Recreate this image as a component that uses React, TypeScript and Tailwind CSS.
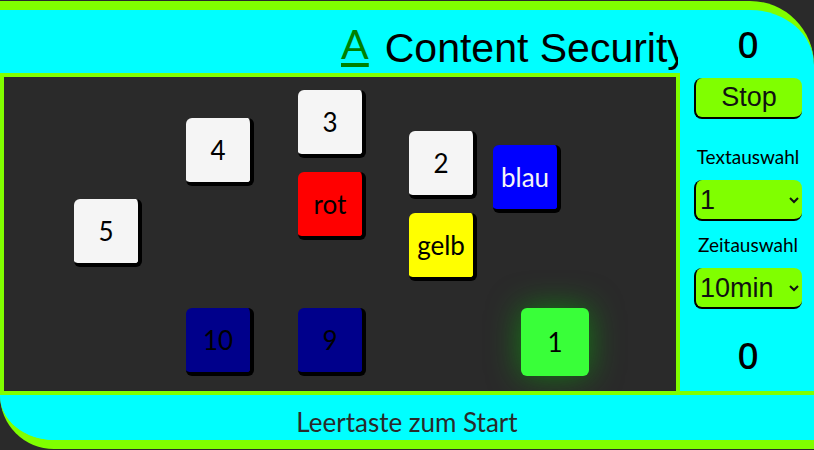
type Tile = { label: string; place: string; look: string };

const solid = "border-r-4 border-b-4 border-black";

const tiles: Tile[] = [
  { label: "5", place: "left-[70px] top-[122px]", look: `${solid} bg-[#f5f5f5] text-black` },
  { label: "4", place: "left-[182px] top-[41px]", look: `${solid} bg-[#f5f5f5] text-black` },
  { label: "3", place: "left-[294px] top-[13px]", look: `${solid} bg-[#f5f5f5] text-black` },
  { label: "2", place: "left-[405px] top-[54px]", look: `${solid} bg-[#f5f5f5] text-black` },
  { label: "rot", place: "left-[294px] top-[95px]", look: `${solid} bg-[#ff0000] text-black` },
  { label: "gelb", place: "left-[405px] top-[136px]", look: `${solid} bg-[#ffff00] text-black` },
  { label: "blau", place: "left-[489px] top-[68px]", look: `${solid} bg-[#0000ff] text-[#f5f5f5]` },
  { label: "10", place: "left-[182px] top-[231px]", look: `${solid} bg-[#00008b] text-black` },
  { label: "9", place: "left-[294px] top-[231px]", look: `${solid} bg-[#00008b] text-black` },
  {
    label: "1",
    place: "left-[517px] top-[231px]",
    look: "bg-[#39ff39] text-black shadow-[0_0_32px_rgba(0,200,0,0.5)]",
  },
];

const control =
  "h-[41px] w-full rounded-lg border-b-2 border-l-2 border-black bg-[#80ff00] font-['Liberation_Sans',Arial,sans-serif] text-[27px] leading-8 text-[#111111]";

const counter = "flex h-[68px] items-center font-['Noto_Sans',sans-serif] text-[37px] font-medium";

function Board() {
  return (
    <main className="relative flex-1 border-x-4 border-t-4 border-[#80ff00] bg-[#2a2a2a]">
      {tiles.map((tile) => (
        <button
          key={tile.label}
          type="button"
          className={`absolute flex size-[68px] items-center justify-center rounded-md text-[26px] ${tile.place} ${tile.look}`}
        >
          {tile.label}
        </button>
      ))}
    </main>
  );
}

function Sidebar() {
  return (
    <aside className="flex w-[134px] shrink-0 flex-col items-center pr-3 pl-[14px]">
      <output className={counter}>0</output>
      <button type="button" className={`pb-0.5 ${control}`}>
        Stop
      </button>
      <label htmlFor="text" className="mt-6 flex h-7 items-center text-[19px]">
        Textauswahl
      </label>
      <select id="text" defaultValue="1" className={`mt-[9px] ${control}`}>
        <option>1</option>
        <option>2</option>
        <option>3</option>
      </select>
      <label htmlFor="time" className="mt-[10px] flex h-7 items-center text-[19px]">
        Zeitauswahl
      </label>
      <select id="time" defaultValue="10min" className={`mt-[9px] ${control}`}>
        <option>1min</option>
        <option>5min</option>
        <option>10min</option>
      </select>
      <output className={`mt-3 ${counter}`}>0</output>
    </aside>
  );
}

export default function App() {
  return (
    <div className="flex min-h-screen flex-col bg-[#2a2a2a] py-px font-[Lato,'Gill_Sans',sans-serif] text-black">
      <div className="flex flex-1 flex-col overflow-hidden rounded-tr-[64px] rounded-bl-[54px] border-y-9 border-[#80ff00] bg-[#00ffff]">
        <div className="flex flex-1">
          <div className="flex min-w-0 flex-1 flex-col">
            <header className="mr-0.5 flex h-[63px] items-center overflow-hidden text-[41px] leading-12 whitespace-nowrap">
              <span className="w-1/2 shrink-0" />
              <span className="ml-0.5 pt-1 text-[#008000] underline decoration-4 underline-offset-4">A</span>
              <h1 className="ml-4 pt-3 font-['Liberation_Sans',Arial,sans-serif]">Content Security</h1>
            </header>
            <Board />
          </div>
          <Sidebar />
        </div>
        <footer className="relative flex h-[49px] items-center justify-center border-t-4 border-[#80ff00] bg-[#00ffff] pt-[10px] text-[26px] text-[#2a2a2a]">
          Leertaste zum Start
        </footer>
      </div>
    </div>
  );
}
